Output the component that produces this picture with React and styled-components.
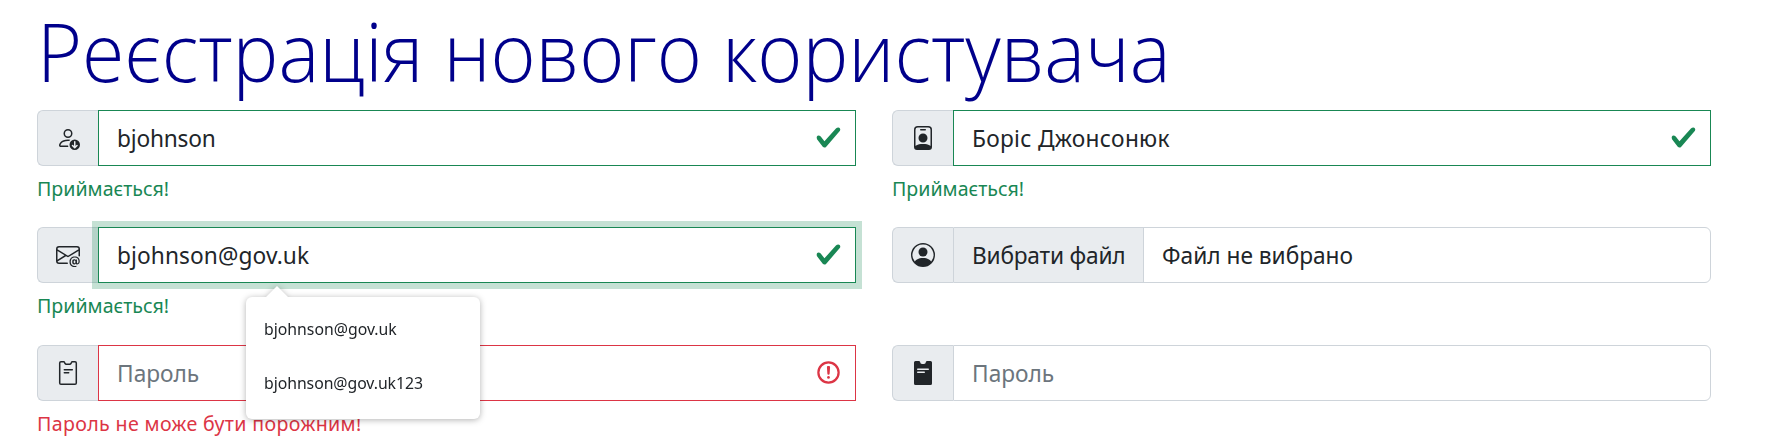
import React from 'react';
import styled, { createGlobalStyle } from 'styled-components';
import { BsPersonDown, BsPersonBadge, BsEnvelopeAt, BsPersonCircle } from 'react-icons/bs';

const Global = createGlobalStyle`
  * { box-sizing: border-box; }
  body { margin: 0; background: #fff; color: #212529; overflow: hidden;
    font-family: "Noto Sans", "Open Sans", sans-serif; font-size: 22.7px; line-height: 36px; }
`;
const Page = styled.main`
  height: 437px;
  padding: 0 0 0 37px;
  overflow: hidden;
`;
const Title = styled.h1`
  margin: 0;
  height: 110px;
  line-height: 101px;
  font-family: "Open Sans", "Noto Sans", sans-serif;
  font-size: 82px;
  font-weight: 300;
  color: darkblue;
  white-space: nowrap;
  transform: scaleX(0.939);
  transform-origin: 0 0;
`;
const Text = styled.span`
  white-space: nowrap;
  letter-spacing: ${(p) => p.$ls || 0}px;
`;
const Form = styled.div`
  display: grid;
  grid-template-columns: 819px 819px;
  grid-template-rows: 117px 118px 92px;
  column-gap: 36px;
`;
const Field = styled.div`
  display: flex;
  flex-direction: column;
`;
const Group = styled.div`
  display: flex;
  flex: none;
  height: 56px;
`;
const Addon = styled.div`
  width: 61px;
  flex: none;
  display: flex;
  align-items: center;
  justify-content: center;
  background: #e9ecef;
  border: 1px solid #ced4da;
  border-right: 0;
  border-radius: 6px 0 0 6px;
  svg { display: block; width: 24px; height: 24px; }
`;
const colors = { valid: '#198754', invalid: '#dc3545' };
const Control = styled.div`
  position: relative;
  flex: 1;
  display: flex;
  align-items: center;
  justify-content: space-between;
  padding: 2px 13px 0 18px;
  background: #fff;
  border: 1px solid ${(p) => colors[p.$state] || '#ced4da'};
  border-radius: ${(p) => (p.$state ? 0 : '0 6px 6px 0')};
  color: ${(p) => (p.$placeholder ? '#6c757d' : '#212529')};
  box-shadow: ${(p) => (p.$focus ? '0 0 0 6px rgba(25,135,84,.25)' : 'none')};
  svg { display: block; flex: none; margin-bottom: 3px; }
`;
const FileControl = styled(Control)`
  justify-content: flex-start;
  padding: 0;
  overflow: hidden;
  ${Text} { padding-top: 2px; }
`;
const FileButton = styled.div`
  width: 190px;
  height: 100%;
  display: flex;
  align-items: center;
  padding-left: 18px;
  margin-right: 18px;
  background: #e9ecef;
  border-right: 1px solid #ced4da;
`;
const Feedback = styled.div`
  margin-top: 6px;
  height: 33px;
  line-height: 34px;
  font-size: 19.6px;
  color: ${(p) => colors[p.$state]};
`;
const Popup = styled.div`
  position: absolute;
  top: 69px;
  left: 147px;
  width: 234px;
  height: 122px;
  padding: 5px 18px;
  background: #fff;
  border-radius: 6px;
  filter: drop-shadow(0 1px 3px rgba(0, 0, 0, 0.3));
  z-index: 2;
  font-size: 15.8px;
  &::before {
    content: "";
    position: absolute;
    left: 19px;
    top: -11px;
    border: 12px solid transparent;
    border-top: 0;
    border-bottom-color: #fff;
  }
`;
const Option = styled.div`
  height: 54px;
  line-height: 54px;
`;

const Check = () => (
  <svg width="27" height="27" viewBox="0 0 8 8">
    <path fill="#198754" d="M2.3 6.73.6 4.53c-.4-1.04.46-1.4 1.1-.8l1.1 1.4 3.4-3.8c.6-.63 1.6-.27 1.2.7l-4 4.6c-.43.5-.8.4-1.1.1z" />
  </svg>
);
const Alert = () => (
  <svg width="27" height="27" viewBox="0 0 12 12" fill="none" stroke="#dc3545">
    <circle cx="6" cy="6" r="4.5" />
    <path strokeLinejoin="round" d="M5.8 3.6h.4L6 6.5z" />
    <circle cx="6" cy="8.2" r=".6" fill="#dc3545" stroke="none" />
  </svg>
);
const Note = () => (
  <svg viewBox="0 0 24 24" fill="none" stroke="#212529" strokeWidth="1.5" strokeLinejoin="round" strokeLinecap="round">
    <path d="M5 .8h2.600q.7 0 1 .8l.4.8q.4.9 1.300.9h3.400q.9 0 1.300-.9l.4-.8q.3-.8 1-.8H19q1.300 0 1.300 1.300v19.800q0 1.300-1.300 1.300H5q-1.300 0-1.300-1.300V2.100Q3.700.8 5 .8z" />
    <path d="M8.300 8.700h8M8.300 11.700h4.400" />
  </svg>
);
const NoteFill = () => (
  <svg viewBox="0 0 24 24">
    <path fill="#212529" d="M4.500 0h3.500q.8 0 1 .8.4 2.200 2 2.200h2q1.600 0 2-2.200.2-.8 1-.8h3.500Q21 0 21 1.500v21q0 1.500-1.500 1.500h-15Q3 24 3 22.500v-21Q3 0 4.500 0z" />
    <path stroke="#e9ecef" strokeWidth="1.400" strokeLinecap="round" d="M6.700 8.200h10.600M6.700 11.200h6.600" />
  </svg>
);

export default function App() {
  return (
    <Page>
      <Global />
      <Title>Реєстрація нового користувача</Title>
      <Form>
        <Field>
          <Group>
            <Addon><BsPersonDown /></Addon>
            <Control $state="valid"><Text $ls={-0.2}>bjohnson</Text><Check /></Control>
          </Group>
          <Feedback $state="valid"><Text>Приймається!</Text></Feedback>
        </Field>
        <Field>
          <Group>
            <Addon><BsPersonBadge /></Addon>
            <Control $state="valid"><Text $ls={0.3}>Боріс Джонсонюк</Text><Check /></Control>
          </Group>
          <Feedback $state="valid"><Text>Приймається!</Text></Feedback>
        </Field>
        <Field>
          <Group>
            <Addon><BsEnvelopeAt /></Addon>
            <Control $state="valid" $focus>
              <Text $ls={0.1}>bjohnson@gov.uk</Text><Check />
              <Popup>
                <Option><Text>bjohnson@gov.uk</Text></Option>
                <Option><Text $ls={-0.05}>bjohnson@gov.uk123</Text></Option>
              </Popup>
            </Control>
          </Group>
          <Feedback $state="valid"><Text>Приймається!</Text></Feedback>
        </Field>
        <Field>
          <Group>
            <Addon><BsPersonCircle /></Addon>
            <FileControl>
              <FileButton><Text $ls={-0.2}>Вибрати файл</Text></FileButton>
              <Text>Файл не вибрано</Text>
            </FileControl>
          </Group>
        </Field>
        <Field>
          <Group>
            <Addon><Note /></Addon>
            <Control $state="invalid" $placeholder><Text>Пароль</Text><Alert /></Control>
          </Group>
          <Feedback $state="invalid"><Text $ls={0.36}>Пароль не може бути порожним!</Text></Feedback>
        </Field>
        <Field>
          <Group>
            <Addon><NoteFill /></Addon>
            <Control $placeholder><Text>Пароль</Text></Control>
          </Group>
        </Field>
      </Form>
    </Page>
  );
}
